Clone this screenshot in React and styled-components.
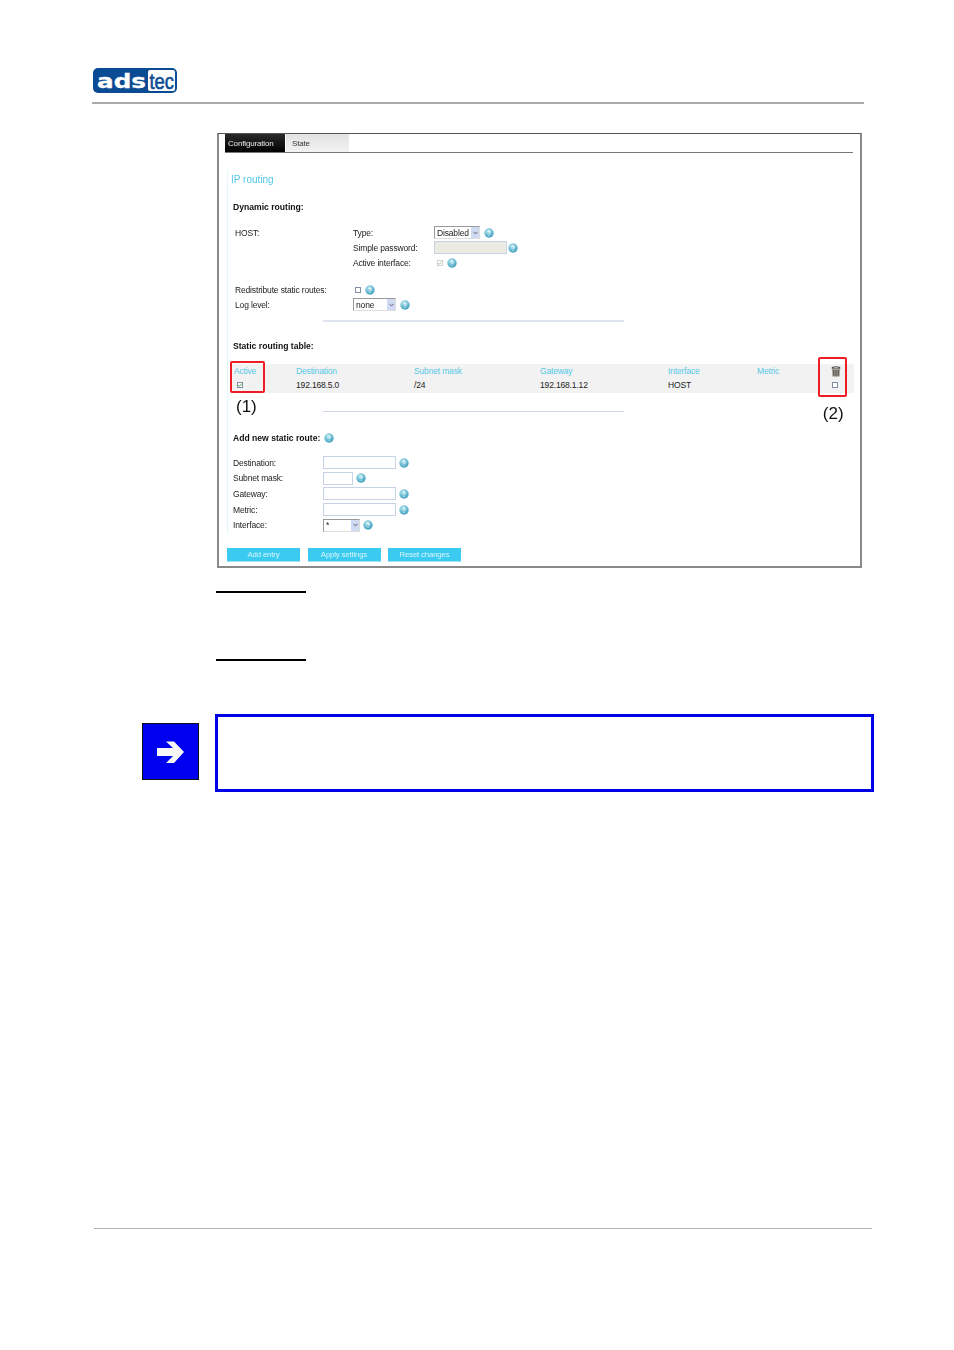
import React from 'react';
import styled, { createGlobalStyle } from 'styled-components';

const Global = createGlobalStyle`
  html, body { margin: 0; padding: 0; background: #fff; }
  body { font-family: "Liberation Sans", Arial, sans-serif; }
`;

const Page = styled.div`
  position: relative;
  width: 954px;
  height: 1350px;
  overflow: hidden;
  background: #fff;
`;
const Header = styled.header`
  margin-left: 92px;
  width: 772px;
  height: 104px;
  padding-top: 67px;
  box-sizing: border-box;
  border-bottom: 2px solid #aaabad;
`;
const Panel = styled.section`
  margin: 29px 0 0 217px;
  width: 645px;
  height: 435px;
  box-sizing: border-box;
  border: 2px solid #8a8a8a;
  border-top: 1px solid #555;
  filter: blur(0.35px);
  font-size: 8.5px;
  letter-spacing: -0.16px;
  color: #222;
`;
const TabBar = styled.nav`
  display: flex;
  margin-left: 6px;
  width: 628px;
  height: 19px;
  box-sizing: border-box;
  border-bottom: 1px solid #777;
  font-size: 8px;
`;
const Tab = styled.div`
  width: ${p => (p.$active ? 60 : 63)}px;
  margin-right: ${p => (p.$active ? 1 : 0)}px;
  padding-left: ${p => (p.$active ? 3 : 6)}px;
  box-sizing: border-box;
  line-height: 19px;
  color: ${p => (p.$active ? '#e8e8e8' : '#333')};
  background: ${p => (p.$active ? 'linear-gradient(#2a2a2a, #000)' : 'linear-gradient(#e2e2e2, #f2f2f2)')};
`;
const Content = styled.div`
  margin: 17px 0 0 8px;
  width: 628px;
  height: 364px;
  border-left: 1px solid #e2f6fb;
`;
const Title = styled.h1`
  margin: 0 0 0 3px;
  padding-top: 1px;
  height: 17px;
  font-size: 10px;
  font-weight: 400;
  letter-spacing: 0;
  line-height: 18px;
  color: #55c8e6;
`;
const Heading = styled.h2`
  display: flex;
  align-items: center;
  gap: 4px;
  margin: ${p => p.$top}px 0 0 5px;
  height: 14px;
  font-size: 8.6px;
  letter-spacing: 0;
  font-weight: 700;
  color: #111;
`;
const DynGrid = styled.div`
  display: grid;
  grid-template-columns: 118px 81px 1fr;
  grid-auto-rows: 15px;
  align-items: center;
  margin: ${p => p.$top}px 0 0 7px;
`;
const Inline = styled.div`
  display: flex;
  align-items: center;
  gap: ${p => p.$gap ?? 5}px;
  padding-left: ${p => p.$pad ?? 0}px;
  grid-column: ${p => (p.$wide ? 'span 2' : 'auto')};
`;
const Rule = styled.div`
  margin: ${p => p.$top}px 0 0 95px;
  width: 301px;
  height: 2px;
  background: #dfe4f1;
`;
const Band = styled.div`
  position: relative;
  display: grid;
  grid-template-columns: 62px 118px 126px 128px 89px 74px 1fr;
  grid-template-rows: 14px 13px;
  align-items: center;
  margin: 11px 0 0 2px;
  padding: 0 0 2px 4px;
  width: 620px;
  background: #f2f2f2;
`;
const Th = styled.div`
  color: #55c8e6;
`;
const Td = styled.div`
  color: #222;
`;
const RedBox = styled.div`
  position: absolute;
  left: ${p => p.$left}px;
  top: ${p => p.$top}px;
  width: ${p => p.$w}px;
  height: ${p => p.$h}px;
  box-sizing: border-box;
  border: 2px solid #ee1c25;
  border-radius: 2px;
`;
const NoteRow = styled.div`
  display: flex;
  align-items: flex-start;
  height: 30px;
  padding-left: 8px;
`;
const Note = styled.div`
  margin-top: ${p => p.$top}px;
  margin-left: ${p => p.$left}px;
  font-size: 17px;
  letter-spacing: 0;
  line-height: 18px;
  color: #111;
`;
const NoteRule = styled.div`
  margin: 18px 0 0 66px;
  width: 301px;
  height: 1px;
  background: #cdd6e6;
`;
const FormGrid = styled.div`
  display: grid;
  grid-template-columns: 90px 1fr;
  grid-auto-rows: 15.6px;
  align-items: center;
  margin: 10px 0 0 5px;
`;
const Input = styled.div`
  width: ${p => p.$w}px;
  height: 13px;
  box-sizing: border-box;
  background: ${p => (p.$disabled ? '#ebebe4' : '#fff')};
  border: 1px solid #c6d3e6;
`;
const Select = styled.div`
  display: flex;
  align-items: center;
  justify-content: space-between;
  width: ${p => p.$w}px;
  height: 13px;
  box-sizing: border-box;
  padding-left: 2px;
  background: #fff;
  border: 1px solid #ddd;
  border-left-color: #999;
  border-top-color: #999;
`;
const SelectArrow = styled.span`
  display: flex;
  align-items: center;
  justify-content: center;
  width: 8px;
  height: 11px;
  background: #cfdbf4;
`;
const Check = styled.span`
  display: flex;
  align-items: center;
  justify-content: center;
  width: 6px;
  height: 6px;
  box-sizing: border-box;
  margin-left: ${p => p.$left ?? 0}px;
  background: #fff;
  border: 1px solid ${p => (p.$dim ? '#cfd2cf' : '#7f8ea3')};
`;
const Buttons = styled.div`
  display: flex;
  gap: 7.5px;
  margin-top: 15px;
  margin-left: -1px;
`;
const Button = styled.div`
  width: 73px;
  height: 13px;
  line-height: 13px;
  text-align: center;
  font-size: 7.8px;
  color: #d8f5fc;
  background: #3ccbf0;
  border-bottom: 1px solid #a5e3f3;
`;
const SigLine = styled.div`
  margin: ${p => p.$top}px 0 0 216px;
  width: 90px;
  height: 2px;
  background: #000;
`;
const NoteBlock = styled.div`
  display: flex;
  align-items: flex-start;
  margin: 53px 0 0 142px;
`;
const ArrowBadge = styled.div`
  width: 57px;
  height: 57px;
  margin-top: 9px;
  flex: none;
`;
const NoteBox = styled.div`
  margin-left: 16px;
  width: 659px;
  height: 78px;
  box-sizing: border-box;
  border: 3px solid #0000e6;
`;
const Footer = styled.footer`
  position: absolute;
  left: 94px;
  top: 1228px;
  width: 778px;
  height: 1px;
  background: #b0b0b0;
`;

const Logo = () => (
  <svg width="100" height="30" viewBox="0 0 100 30">
    <rect x="1" y="1" width="84" height="25" rx="5" fill="#0b4b93" />
    <rect x="56" y="3" width="27" height="21" rx="2" fill="#fff" />
    <text x="5" y="20.5" fontFamily="DejaVu Sans" fontWeight="700" fontSize="19" fill="#fff" stroke="#fff" strokeWidth="0.3" textLength="49" lengthAdjust="spacingAndGlyphs">ads</text>
    <text x="57.5" y="22" fontFamily="Liberation Sans" fontSize="22" fill="#0b4b93" stroke="#0b4b93" strokeWidth="0.6" textLength="24.5" lengthAdjust="spacingAndGlyphs">tec</text>
  </svg>
);

const Help = () => (
  <svg width="10" height="10" viewBox="0 0 10 10">
    <defs>
      <radialGradient id="hlp" cx="0.4" cy="0.3" r="0.8">
        <stop offset="0" stopColor="#b6e6f0" />
        <stop offset="1" stopColor="#2f97b8" />
      </radialGradient>
    </defs>
    <circle cx="5" cy="5" r="4.7" fill="url(#hlp)" />
    <path d="M3.7 3.9 C3.8 2.6 6.3 2.6 6.3 3.9 C6.3 4.9 5 4.8 5 5.9 M5 6.9 V7.7" stroke="#fff" strokeWidth="0.9" fill="none" />
  </svg>
);

const Tick = ({ color }) => (
  <svg width="4" height="4" viewBox="0 0 4 4">
    <path d="M0.3 2 L1.5 3.3 L3.7 0.6" stroke={color} strokeWidth="0.9" fill="none" />
  </svg>
);

const Caret = () => (
  <svg width="5" height="4" viewBox="0 0 5 4">
    <path d="M0.5 0.8 L2.5 3 L4.5 0.8" stroke="#667" strokeWidth="1" fill="none" />
  </svg>
);

const Trash = () => (
  <svg width="10" height="11" viewBox="0 0 10 11">
    <ellipse cx="5" cy="2" rx="4.4" ry="1.7" fill="#4a4a46" />
    <ellipse cx="5" cy="1.8" rx="2.6" ry="0.7" fill="#b5b5ac" />
    <path d="M0.8 2.6 H9.2 L8.6 10.4 Q5 11.2 1.4 10.4 Z" fill="#a3a39a" />
    <path d="M2.8 4 V9.8 M5 4 V10 M7.2 4 V9.8" stroke="#3c3c38" strokeWidth="0.9" />
  </svg>
);

const Arrow = () => (
  <svg width="57" height="57" viewBox="0 0 57 57">
    <rect x="0.5" y="0.5" width="56" height="56" fill="#0000f0" stroke="#111" />
    <path d="M24 18.5 H32 L42 29 L32 40 H24 L31 33 H15 V25 H31 Z" fill="#f6f6f6" />
  </svg>
);

const Sel = ({ w, children }) => (
  <Select $w={w}>
    {children}
    <SelectArrow><Caret /></SelectArrow>
  </Select>
);

const formRows = [
  ['Destination:', <Input $w={73} />],
  ['Subnet mask:', <Input $w={30} />],
  ['Gateway:', <Input $w={73} />],
  ['Metric:', <Input $w={73} />],
  ['Interface:', <Sel w={37}>*</Sel>],
];

export default function App() {
  return (
    <Page>
      <Global />
      <Header><Logo /></Header>
      <Panel>
        <TabBar>
          <Tab $active>Configuration</Tab>
          <Tab>State</Tab>
        </TabBar>
        <Content>
          <Title>IP routing</Title>
          <Heading $top={12}>Dynamic routing:</Heading>
          <DynGrid $top={11}>
            <div>HOST:</div>
            <div>Type:</div>
            <Inline $gap={4}><Sel w={46}>Disabled</Sel><Help /></Inline>
            <div />
            <div>Simple password:</div>
            <Inline $gap={1}><Input $w={73} $disabled /><Help /></Inline>
            <div />
            <div>Active interface:</div>
            <Inline $gap={4} $pad={3}><Check $dim><Tick color="#bbb" /></Check><Help /></Inline>
          </DynGrid>
          <DynGrid $top={12}>
            <div>Redistribute static routes:</div>
            <Inline $gap={4} $pad={2} $wide><Check /><Help /></Inline>
            <div>Log level:</div>
            <Inline $gap={4} $wide><Sel w={43}>none</Sel><Help /></Inline>
          </DynGrid>
          <Rule $top={8} />
          <Heading $top={17}>Static routing table:</Heading>
          <Band>
            <RedBox $left={0} $top={-3} $w={35} $h={32} />
            <RedBox $left={588} $top={-7} $w={29} $h={40} />
            <Th>Active</Th><Th>Destination</Th><Th>Subnet mask</Th><Th>Gateway</Th><Th>Interface</Th><Th>Metric</Th>
            <Trash />
            <Td><Check $left={3}><Tick color="#3a9a3a" /></Check></Td>
            <Td>192.168.5.0</Td><Td>/24</Td><Td>192.168.1.12</Td><Td>HOST</Td><Td />
            <Td><Check $left={1} /></Td>
          </Band>
          <NoteRow>
            <Note $top={5} $left={0}>(1)</Note>
            <NoteRule />
            <Note $top={12} $left={199}>(2)</Note>
          </NoteRow>
          <Heading $top={8}>Add new static route: <Help /></Heading>
          <FormGrid>
            {formRows.map(([label, control]) => (
              <React.Fragment key={label}>
                <div>{label}</div>
                <Inline $gap={3}>{control}<Help /></Inline>
              </React.Fragment>
            ))}
          </FormGrid>
          <Buttons>
            <Button>Add entry</Button>
            <Button>Apply settings</Button>
            <Button>Reset changes</Button>
          </Buttons>
        </Content>
      </Panel>
      <SigLine $top={23} />
      <SigLine $top={66} />
      <NoteBlock>
        <ArrowBadge><Arrow /></ArrowBadge>
        <NoteBox />
      </NoteBlock>
      <Footer />
    </Page>
  );
}
